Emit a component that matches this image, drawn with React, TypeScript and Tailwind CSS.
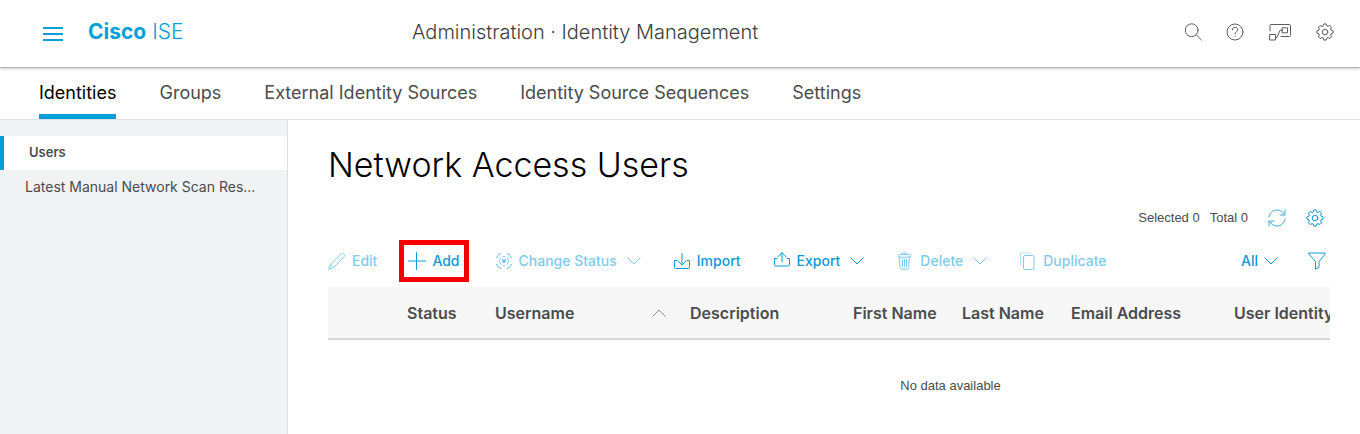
import type { ReactNode } from "react";

const tabs = [
  "Identities",
  "Groups",
  "External Identity Sources",
  "Identity Source Sequences",
  "Settings",
];

function Svg({ children, className = "size-[18px]", box = "0 0 18 18" }: { children: ReactNode; className?: string; box?: string }) {
  return (
    <svg
      className={`shrink-0 ${className}`}
      viewBox={box}
      fill="none"
      stroke="currentColor"
      strokeLinecap="round"
      strokeLinejoin="round"
      aria-hidden="true"
    >
      {children}
    </svg>
  );
}

const SearchIcon = () => (
  <Svg>
    <circle cx="7.7" cy="7.2" r="6.400" />
    <path d="M12.400 12l5 5" />
  </Svg>
);

const HelpIcon = () => (
  <Svg>
    <circle cx="9" cy="9" r="8" />
    <path d="M6.4 6.8C6.4 5.2 7.5 4.2 9 4.2s2.7 1 2.7 2.5c0 1.9-2.7 2.1-2.7 4.3" />
    <path d="M9 13.2v.3" />
  </Svg>
);

const TopologyIcon = () => (
  <Svg className="h-[18px] w-[24px]" box="0 0 24 18">
    <path d="M2 8V2.500c0-.600.400-1 1-1h18.500c.600 0 1 .400 1 1v10c0 .600-.400 1-1 1H13" />
    <rect x="2" y="11.500" width="5.500" height="5.500" />
    <rect x="14.500" y="4.800" width="5" height="5" />
    <path d="M7.500 14.500H9l3-7.200h2.500" />
  </Svg>
);

const GearIcon = () => (
  <Svg>
    <path d="M7.1 3 7.9.9h2.2L10.9 3l1 .4 2.050-.9 1.550 1.550-.9 2.050.4 1 2.100.8v2.200l-2.100.8-.4 1 .9 2.050-1.550 1.550-2.050-.9-1 .4-.8 2.100H7.900L7.100 15l-1-.4-2.050.9-1.550-1.550.9-2.050-.4-1-2.100-.8V7.900L3 7.100l.4-1-.9-2.050L4.050 2.500l2.050.9z" />
    <circle cx="9" cy="9" r="2.800" />
  </Svg>
);

const PencilIcon = () => (
  <Svg>
    <path d="M1 17l1.300-4.600L12.800 1.900c.9-.9 2.200-.9 3.100 0s.9 2.200 0 3.100L5.500 15.600 1 17zM2.300 12.400l3.200 3.200" />
  </Svg>
);

const PlusIcon = () => (
  <Svg>
    <path d="M8.500 .5v17M0 9h17.500" />
  </Svg>
);

const StatusIcon = () => (
  <Svg>
    <circle cx="9" cy="9" r="1.700" fill="currentColor" />
    <path d="M6 5.500a4.600 4.600 0 0 0 0 7M12 5.500a4.600 4.600 0 0 1 0 7M8 4.500a4.600 4.600 0 0 1 2 0M8 13.500a4.600 4.600 0 0 0 2 0" />
    <path d="M16.250 5.600a8 8 0 0 0-3.850-3.850M5.600 1.750A8 8 0 0 0 1.750 5.600M1.750 12.400a8 8 0 0 0 3.850 3.850M12.400 16.250a8 8 0 0 0 3.850-3.850" strokeWidth="1.300" strokeDasharray="2 1.400" />
  </Svg>
);

const ImportIcon = () => (
  <Svg>
    <path d="M4 8.500H1.500v6.800c0 .7.500 1.200 1.200 1.200h12.600c.7 0 1.200-.5 1.200-1.200V8.500H14M9 1.500v11M5 9l4 4 4-4" />
  </Svg>
);

const ExportIcon = () => (
  <Svg>
    <path d="M4 6.500H1.500v6.300c0 .7.500 1.200 1.200 1.200h12.600c.7 0 1.200-.5 1.200-1.200V6.500H14M9 10V.7M5 4.700l4-4 4 4" />
  </Svg>
);

const TrashIcon = () => (
  <Svg>
    <path d="M3.500 5l.6 10.800c.1.800.6 1.400 1.400 1.400h5.800c.8 0 1.300-.600 1.400-1.400L13.300 5M2.500 4.800V3.300c0-.500.400-.800.900-.800h10c.5 0 .9.300.9.800v1.500zM5.500 2.300C5.500 1.500 6 1 6.800 1H10c.8 0 1.300.500 1.300 1.300M6.500 7.500v7M8.500 7.500v7M10.500 7.500v7" />
  </Svg>
);

const DuplicateIcon = () => (
  <Svg>
    <rect x="4.500" y="3.500" width="10.500" height="14" rx="1.500" />
    <path d="M1.500 1h9.500M1.500 3.200v11" strokeDasharray=".5 1.700" />
  </Svg>
);

const ChevronDown = () => (
  <Svg className="h-2 w-3.5" box="0 0 14 8">
    <path d="M.8.8 7 7 13.2.8" />
  </Svg>
);

const RefreshIcon = () => (
  <Svg>
    <path d="M1 8C1.400 4 4.800 1 9 1c3 0 5.500 1.500 7.500 4.500M17 1v5h-5M17 10c-.4 4-3.800 7-8 7-3 0-5.500-1.500-7.500-4.500M1 17v-5h5" />
  </Svg>
);

const FunnelIcon = () => (
  <Svg>
    <path d="M1 1h16v1.200l-6 7.300v5.700L7.500 17.200V9.500L1 2.200z" />
  </Svg>
);

function Action({
  icon,
  label,
  disabled,
  menu,
  className = "",
}: {
  icon: ReactNode;
  label: string;
  disabled?: boolean;
  menu?: boolean;
  className?: string;
}) {
  return (
    <button
      type="button"
      disabled={disabled}
      aria-haspopup={menu ? "menu" : undefined}
      className={`flex h-[42px] items-center gap-1.5 whitespace-nowrap text-[#0d98d8] disabled:text-[#80cbec] ${className}`}
    >
      {icon}
      <span>{label}</span>
      {menu && (
        <span className="ml-1">
          <ChevronDown />
        </span>
      )}
    </button>
  );
}

function Header() {
  return (
    <header className="relative flex h-[68px] items-center border-b border-[#b0b2b4] pr-[26px] pb-[3px] pl-[43px] shadow-[0_1px_3px_rgba(0,0,0,0.2)]">
      <button type="button" aria-label="Menu" className="mt-1 flex w-5 flex-col gap-1 text-[#049fd9]">
        <span className="h-0.5 bg-current" />
        <span className="h-0.5 bg-current" />
        <span className="h-0.5 bg-current" />
      </button>
      <a href="#home" className="ml-[25px] w-[324px] text-[21px] text-[#049fd9]">
        <span className="font-bold">Cisco</span> <span className="font-light">ISE</span>
      </a>
      <h2 className="text-xl font-light text-[#3c3e40]">Administration · Identity Management</h2>
      <div className="ml-auto flex items-center gap-6 text-[#5c5e60]">
        <button type="button" aria-label="Search"><SearchIcon /></button>
        <button type="button" aria-label="Help"><HelpIcon /></button>
        <button type="button" aria-label="Topology"><TopologyIcon /></button>
        <button type="button" aria-label="Settings"><GearIcon /></button>
      </div>
    </header>
  );
}

export default function App() {
  return (
    <div className="flex min-h-screen flex-col bg-white font-['Inter','Liberation_Sans',sans-serif] text-[#4a4c4e]">
      <Header />
      <nav className="flex h-[52px] gap-[43px] border-b border-[#dfe1e3] pl-[39px] text-lg">
        {tabs.map((tab, i) => (
          <a
            key={tab}
            href="#tab"
            aria-current={i === 0 ? "page" : undefined}
            className="flex items-center border-b-5 border-transparent pt-1 whitespace-nowrap aria-[current=page]:border-[#049fd9] aria-[current=page]:text-black"
          >
            {tab}
          </a>
        ))}
      </nav>
      <div className="flex grow">
        <aside className="w-[288px] shrink-0 border-r border-[#dcdee0] bg-[#f1f2f4] pt-4">
          <a href="#users" className="flex h-[34px] items-center border-l-4 border-[#049fd9] bg-white pl-[25px] text-[13px] font-semibold">
            Users
          </a>
          <a href="#scan" className="flex h-[34px] items-center pl-[25px] text-sm">
            Latest Manual Network Scan Res...
          </a>
        </aside>
        <main className="min-w-0 grow pt-[23px] pr-[30px] pl-10">
          <h1 className="text-[34px] leading-[44px] font-light text-black">Network Access Users</h1>
          <div className="mt-[19px] flex h-6 items-center justify-end font-['Liberation_Sans',sans-serif] text-[13px]">
            <span>Selected 0</span>
            <span className="ml-2.5">Total 0</span>
            <button type="button" aria-label="Refresh" className="ml-5 text-[#3fa9dc]"><RefreshIcon /></button>
            <button type="button" aria-label="Table settings" className="mr-1.5 ml-5 text-[#0d98d8]"><GearIcon /></button>
          </div>
          <div className="mt-2.5 flex items-center gap-8 text-sm font-medium">
            <Action icon={<PencilIcon />} label="Edit" disabled />
            <Action icon={<PlusIcon />} label="Add" className="-mr-1.5 -ml-2.5 border-5 border-[#f80000] px-1" />
            <Action icon={<StatusIcon />} label="Change Status" disabled menu />
            <Action icon={<ImportIcon />} label="Import" />
            <Action icon={<ExportIcon />} label="Export" menu />
            <Action icon={<TrashIcon />} label="Delete" disabled menu />
            <Action icon={<DuplicateIcon />} label="Duplicate" disabled />
            <div className="mr-1 ml-auto flex items-center gap-[30px] text-[#0d98d8]">
              <button type="button" aria-haspopup="menu" className="flex items-center gap-1.5">
                All <ChevronDown />
              </button>
              <button type="button" aria-label="Filter"><FunnelIcon /></button>
            </div>
          </div>
          <div className="mt-[5px] overflow-hidden">
            <table className="w-full min-w-[1060px] table-fixed text-left">
              <colgroup>
                <col className="w-[67px]" />
                <col className="w-[88px]" />
                <col className="w-[195px]" />
                <col className="w-[163px]" />
                <col className="w-[109px]" />
                <col className="w-[109px]" />
                <col className="w-[163px]" />
                <col />
              </colgroup>
              <thead className="border-b-2 border-[#d4d6d8] bg-[#f7f7f8] text-base whitespace-nowrap">
                <tr className="h-[52px]">
                  <td />
                  <th className="px-3 font-semibold">Status</th>
                  <th className="px-3 font-semibold" aria-sort="ascending">
                    <span className="flex items-center justify-between">
                      Username
                      <span className="rotate-180 font-normal text-[#8a8c8e]"><ChevronDown /></span>
                    </span>
                  </th>
                  <th className="px-3 font-semibold">Description</th>
                  <th className="px-3 font-semibold">First Name</th>
                  <th className="px-3 font-semibold">Last Name</th>
                  <th className="px-3 font-semibold">Email Address</th>
                  <th className="px-3 font-semibold">User Identity</th>
                </tr>
              </thead>
            </table>
          </div>
          <p className="mt-9 ml-[243px] text-center font-['Liberation_Sans',sans-serif] text-[13px]">No data available</p>
        </main>
      </div>
    </div>
  );
}
